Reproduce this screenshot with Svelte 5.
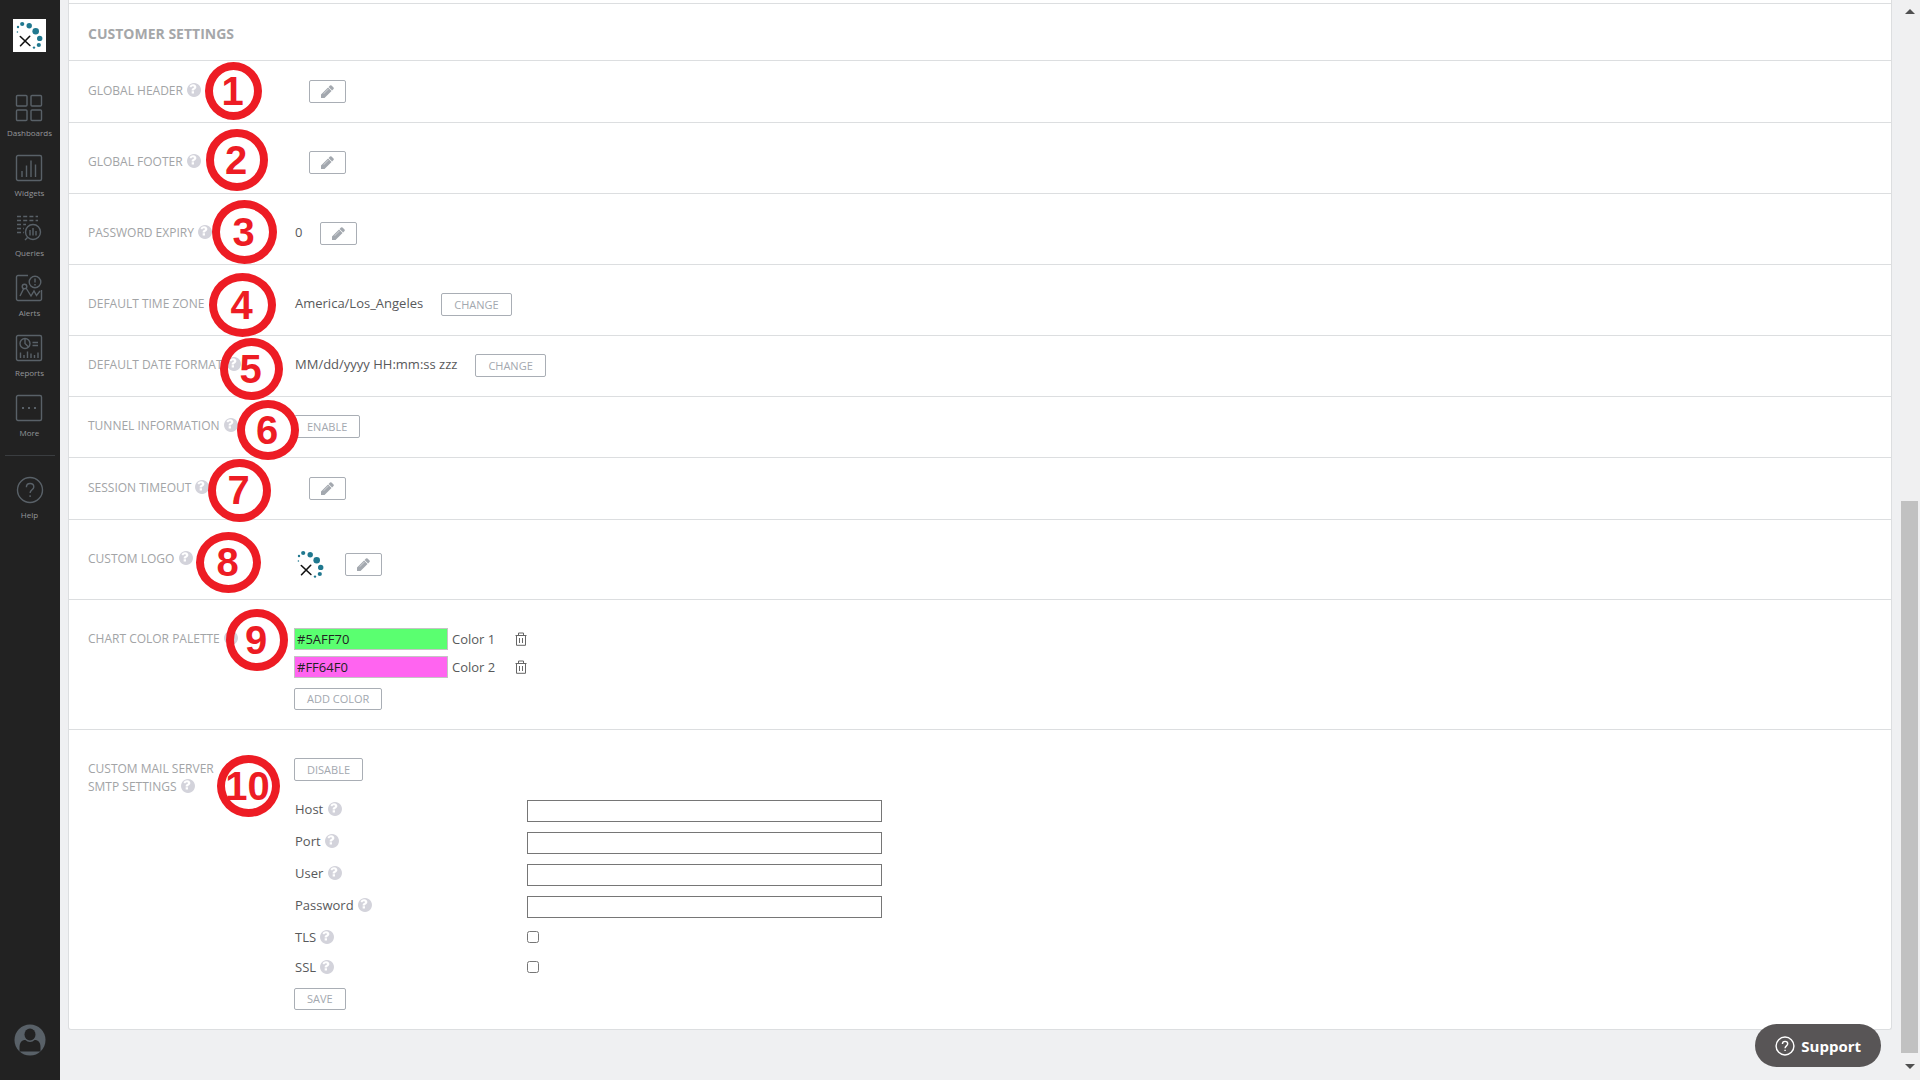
<script>
  const nav_items = [
    { label: "Dashboards", icon: "dashboards" },
    { label: "Widgets", icon: "widgets" },
    { label: "Queries", icon: "queries" },
    { label: "Alerts", icon: "alerts" },
    { label: "Reports", icon: "reports" },
    { label: "More", icon: "more" }
  ];

  const smtp_fields = [
    { id: "host", label: "Host", type: "text" },
    { id: "port", label: "Port", type: "text" },
    { id: "user", label: "User", type: "text" },
    { id: "password", label: "Password", type: "password" },
    { id: "tls", label: "TLS", type: "checkbox" },
    { id: "ssl", label: "SSL", type: "checkbox" }
  ];

  let colors = $state(["#5AFF70", "#FF64F0"]);

  // numbered callouts lying over the settings list
  const callouts = [
    { x: 205, y: 62, w: 57, h: 58 },
    { x: 206, y: 129, w: 62, h: 62 },
    { x: 212, y: 200, w: 65, h: 64 },
    { x: 209, y: 273, w: 67, h: 64 },
    { x: 220, y: 338, w: 63, h: 62 },
    { x: 237, y: 400, w: 62, h: 60 },
    { x: 208, y: 459, w: 63, h: 63 },
    { x: 196, y: 532, w: 65, h: 61 },
    { x: 226, y: 609, w: 62, h: 62 },
    { x: 217, y: 755, w: 63, h: 62 }
  ];
</script>

{#snippet logo()}
  <svg class="logo" viewBox="0 0 33 33" width="33" height="33">
    <g fill="#20788f">
      <circle cx="4.4" cy="13" r="0.8" />
      <circle cx="5" cy="8" r="1.2" />
      <circle cx="9.2" cy="5" r="2.1" />
      <circle cx="16.2" cy="6.8" r="2.7" />
      <circle cx="22.7" cy="12.2" r="3.3" />
      <circle cx="26.7" cy="19.4" r="2.7" />
      <circle cx="25.8" cy="26" r="2.1" />
      <circle cx="21" cy="28.6" r="1.2" />
    </g>
    <path d="M7.3 17.5l9.6 9M16.7 17.3l-9.2 9.4" stroke="#111" stroke-width="1.6" stroke-linecap="round" />
  </svg>
{/snippet}

{#snippet help()}
  <svg class="help" viewBox="128 128 1536 1536" width="14" height="14">
    <path fill="currentColor" d="M896 1248v-192q0-14-9-23t-23-9h-192q-14 0-23 9t-9 23v192q0 14 9 23t23 9h192q14 0 23-9t9-23zm256-672q0-88-55.5-163t-138.5-116-170-41q-243 0-371 213-15 24 8 42l132 100q7 6 19 6 16 0 25-12 53-68 86-92 34-24 86-24 48 0 85.5 26t37.5 59q0 38-20 61t-68 45q-63 28-115.5 86.5t-52.5 125.5v36q0 14 9 23t23 9h192q14 0 23-9t9-23q0-19 21.5-49.5t54.5-49.5q32-18 49-28.5t46-35 44.5-48 28-60.5 12.5-81zm512 320q0 209-103 385.500t-279.500 279.500-385.500 103-385.500-103-279.500-279.500-103-385.500 103-385.500 279.500-279.500 385.500-103 385.500 103 279.500 279.500 103 385.500z" />
  </svg>
{/snippet}

{#snippet edit(name)}
  <button class="btn edit" aria-label="Edit {name}">
    <svg viewBox="128 128 1536 1536" width="13" height="13">
      <path fill="currentColor" d="M1014 608q0-22-22-22-10 0-17 7l-542 542q-7 7-7 17 0 22 22 22 10 0 17-7l542-542q7-7 7-17zm-54-192l416 416-832 832h-416v-416zm683 96q0 53-37 90l-166 166-416-416 166-165q36-38 90-38 53 0 91 38l235 234q37 39 37 91z" />
    </svg>
  </button>
{/snippet}

{#snippet question()}
  <circle cx="14" cy="14" r="12.5" />
  <path d="M10.4 11.2c0-2.2 1.5-3.7 3.7-3.7s3.7 1.4 3.7 3.4c0 2.8-3.7 3-3.7 6.1" />
  <path d="M14.1 19.3v1.6" />
{/snippet}

{#snippet nav_icon(icon)}
  <svg class="nav-icon" viewBox="0 0 28 28" width="28" height="28">
    {#if icon === "dashboards"}
      <rect x="1.5" y="1.5" width="10.5" height="10.5" rx="1" />
      <rect x="16" y="1.5" width="10.5" height="10.5" rx="1" />
      <rect x="1.5" y="16" width="10.5" height="10.5" rx="1" />
      <rect x="16" y="16" width="10.5" height="10.5" rx="1" />
    {:else if icon === "widgets"}
      <rect x="1.5" y="1.5" width="25" height="25" rx="1.5" />
      <path d="M7 17v6M11.5 11.5V23M16 6.5V23M20.5 10.5V23" />
    {:else if icon === "queries"}
      <path stroke-dasharray="4 2.2" d="M2 2.5h21M2 6.5h21M2 10.5h9M2 14.5h7M2 18.5h7" />
      <circle cx="18" cy="18" r="7.5" />
      <path d="M15 16v5.5M18 14v7.5M21 17v4.5M12.5 23.5l-2.5 2.5" />
    {:else if icon === "alerts"}
      <path d="M13 1.5H3a1.5 1.5 0 0 0-1.5 1.5v22A1.5 1.5 0 0 0 3 26.5h22a1.5 1.5 0 0 0 1.5-1.5v-9" />
      <circle cx="20" cy="8" r="5.8" />
      <path d="M20 4.5v4M20 10v1.5M5 22l4-8M11 14l5 8 3-5 2.5 4.5L25 17" />
      <circle cx="9.5" cy="12.5" r="2.3" />
    {:else if icon === "reports"}
      <rect x="1.5" y="1.5" width="25" height="25" rx="1.5" />
      <circle cx="10" cy="9.5" r="5" />
      <path d="M10 4.5v5l3.5 3.5M17.5 8.5H23M17.5 11.5H23M5.5 18.5V24M9 21v3M12.5 17.5V24M16 19.5V24M19.5 21v3M23 18.5V24" />
    {:else if icon === "more"}
      <rect x="1.5" y="1.5" width="25" height="25" rx="1.5" />
      <path stroke-width="2" d="M7 14h2M13 14h2M19 14h2" />
    {:else}
      {@render question()}
    {/if}
  </svg>
{/snippet}

<div class="page">
  <aside>
    <a class="brand" href="#home" aria-label="Home">{@render logo()}</a>
    <nav>
      {#each nav_items as item}
        <a class="nav-link" href="#{item.icon}">
          {@render nav_icon(item.icon)}
          <span>{item.label}</span>
        </a>
      {/each}
    </nav>
    <hr />
    <a class="nav-link" href="#help">
      {@render nav_icon("help")}
      <span>Help</span>
    </a>
    <a class="avatar" href="#account" aria-label="Account">
      <svg viewBox="0 0 32 32" width="32" height="32">
        <circle cx="16" cy="16" r="15.5" fill="#596168" />
        <path d="M5.500 27.500v-4c0-5 2-7.500 6-7.500h9c4 0 6 2.500 6 7.500v4z" fill="#222" />
        <ellipse cx="16" cy="11" rx="6.5" ry="7" fill="#596168" />
        <ellipse cx="16" cy="10.5" rx="5.5" ry="6" fill="#222" />
      </svg>
    </a>
  </aside>

  <main>
    <div class="card">
      <h2>CUSTOMER SETTINGS</h2>

      <section class="row roomy">
        <div class="label">GLOBAL HEADER {@render help()}</div>
        <div class="value empty">{@render edit("global header")}</div>
      </section>
      <section class="row tall">
        <div class="label">GLOBAL FOOTER {@render help()}</div>
        <div class="value empty">{@render edit("global footer")}</div>
      </section>
      <section class="row tall">
        <div class="label">PASSWORD EXPIRY {@render help()}</div>
        <div class="value"><span>0</span>{@render edit("password expiry")}</div>
      </section>
      <section class="row tall">
        <div class="label">DEFAULT TIME ZONE</div>
        <div class="value"><span>America/Los_Angeles</span><button class="btn">CHANGE</button></div>
      </section>
      <section class="row">
        <div class="label">DEFAULT DATE FORMAT {@render help()}</div>
        <div class="value"><span>MM/dd/yyyy HH:mm:ss zzz</span><button class="btn">CHANGE</button></div>
      </section>
      <section class="row">
        <div class="label">TUNNEL INFORMATION {@render help()}</div>
        <div class="value"><button class="btn">ENABLE</button></div>
      </section>
      <section class="row roomy">
        <div class="label">SESSION TIMEOUT {@render help()}</div>
        <div class="value empty">{@render edit("session timeout")}</div>
      </section>
      <section class="row tall">
        <div class="label">CUSTOM LOGO {@render help()}</div>
        <div class="value image">{@render logo()}{@render edit("custom logo")}</div>
      </section>
      <section class="row tall">
        <div class="label">CHART COLOR PALETTE {@render help()}</div>
        <div class="palette">
          {#each colors as color, i}
            <div class="swatch">
              <input id="color-{i}" type="text" bind:value={colors[i]} style="background: {color}" />
              <label for="color-{i}">Color {i + 1}</label>
              <button class="trash" aria-label="Delete color {i + 1}">
                <svg viewBox="0 0 12 14" width="12" height="14" fill="none" stroke="currentColor">
                  <path d="M0.5 3.5h11M3.5 3V1h5v2M1.5 3.5v9.8h9V3.5M4.5 6v5M7.5 6v5" />
                </svg>
              </button>
            </div>
          {/each}
          <button class="btn low add">ADD COLOR</button>
        </div>
      </section>
      <section class="row tall">
        <div class="label">CUSTOM MAIL SERVER SMTP SETTINGS {@render help()}</div>
        <form onsubmit={(e) => e.preventDefault()}>
          <button class="btn disable" type="button">DISABLE</button>
          {#each smtp_fields as field}
            <div class="field" class:check={field.type === "checkbox"}>
              <label for={field.id}>{field.label} {@render help()}</label>
              <input id={field.id} type={field.type} />
            </div>
          {/each}
          <button class="btn low" type="submit">SAVE</button>
        </form>
      </section>
    </div>
  </main>

  <div class="scrollbar">
    <svg viewBox="0 0 10 5" width="10" height="5"><path d="M0 5l5-5 5 5z" fill="#505050" /></svg>
    <div></div>
    <div class="thumb"></div>
    <svg viewBox="0 0 10 5" width="10" height="5"><path d="M0 0l5 5 5-5z" fill="#505050" /></svg>
  </div>

  {#each callouts as c, i}
    <div class="callout" style="left: {c.x}px; top: {c.y}px; width: {c.w}px; height: {c.h}px">{i + 1}</div>
  {/each}

  <button class="support">
    <svg viewBox="0 0 28 28" width="20" height="20">{@render question()}</svg>
    Support
  </button>
</div>

<style>
:global(body) {
  background: #eff0f2;
  font-family: "Open Sans", sans-serif;
}
.page {
  position: relative;
  display: flex;
  min-height: 100vh;
  font-size: 13px;
  line-height: 18px;
  color: #58595b;
}
a {
  text-decoration: none;
}
svg {
  display: block;
  flex: none;
}
button,
input {
  box-sizing: border-box;
  margin: 0;
  font-family: inherit;
}
aside {
  box-sizing: border-box;
  display: flex;
  flex-direction: column;
  align-items: center;
  width: 60px;
  padding-right: 1px;
  flex: none;
  background: #222;
}
.brand {
  margin: 19px 0 42px;
  background: #fff;
}
.nav-link {
  display: flex;
  flex-direction: column;
  align-items: center;
  height: 60px;
  font-size: 8px;
  line-height: 12px;
  color: #94969a;
}
.nav-link span {
  margin-top: 5px;
}
.nav-icon {
  fill: none;
  stroke: #596168;
  stroke-width: 1.4;
}
hr {
  width: 50px;
  margin: 1px 0 20px;
  border: 0;
  border-top: 1px solid #3a3d40;
}
.avatar {
  margin: auto 0 24px;
}
main {
  flex: 1;
  padding: 0 8px;
}
.card {
  background: #fff;
  border: 1px solid #dcdee0;
  border-top: 0;
  border-radius: 0 0 3px 3px;
  padding-top: 3px;
}
h2 {
  margin: 0;
  padding: 21px 19px 17px;
  border-top: 1px solid #dcdee0;
  font-size: 14px;
  line-height: 18px;
  color: #a5a7a9;
}
.row {
  display: grid;
  grid-template-columns: 206px 1fr;
  padding: 18px 19px 19px;
  border-top: 1px solid #dcdee0;
}
.roomy {
  padding-top: 19px;
}
.tall {
  padding-top: 28px;
}
.label {
  width: 150px;
  padding-top: 2px;
  font-size: 12px;
  color: #a2a4a6;
  white-space: nowrap;
}
.row:last-child .label {
  white-space: normal;
}
.help {
  display: inline-block;
  margin-left: 1px;
  vertical-align: -2px;
  color: #d3d3db;
}
.value {
  display: flex;
  align-items: center;
  gap: 18px;
}
.value span {
  padding: 0 0 3px 1px;
}
.empty {
  padding-left: 15px;
}
.image {
  height: 32px;
}
.btn {
  height: 23px;
  padding: 0 12px;
  background: #fff;
  border: 1px solid #a9aeb5;
  border-radius: 2px;
  font-size: 11px;
  line-height: 18px;
  color: #a3a8af;
}
.edit {
  padding: 0 11px;
}
.low {
  height: 22px;
}
.palette {
  display: flex;
  flex-direction: column;
  align-items: flex-start;
  gap: 6px;
}
.swatch {
  display: flex;
  align-items: center;
}
.swatch input {
  width: 154px;
  height: 22px;
  padding: 0 2px;
  border: 1px solid #c4c4c4;
  font-size: 13px;
  color: #222;
}
.swatch label {
  width: 63px;
  margin-left: 4px;
}
.trash {
  padding: 0;
  border: 0;
  background: none;
  color: #666;
}
.add {
  margin-top: 4px;
}
form {
  display: flex;
  flex-direction: column;
  align-items: flex-start;
  gap: 10px;
}
.disable {
  margin-bottom: 9px;
}
.field {
  display: grid;
  grid-template-columns: 233px 355px;
  height: 22px;
}
.field label {
  padding-left: 1px;
}
.field input {
  height: 22px;
  padding: 0 2px;
  border: 1px solid #767676;
  background: #fff;
}
.field.check {
  height: 20px;
}
.field.check input {
  width: 12px;
  height: 12px;
  margin-top: 3px;
}
.scrollbar {
  display: grid;
  grid-template-rows: 22px 479fr 552fr 27px;
  place-items: center;
  width: 17px;
  padding: 0 2px 0 1px;
  flex: none;
  background: #f0f0f1;
}
.thumb {
  width: 100%;
  height: 100%;
  background: #c1c1c1;
}
.callout {
  position: absolute;
  box-sizing: border-box;
  display: flex;
  align-items: center;
  justify-content: center;
  padding-right: 2px;
  border: 8px solid #ed1c24;
  border-radius: 50%;
  font: bold 40px "Liberation Sans", Arial, sans-serif;
  color: #ed1c24;
  pointer-events: none;
}
.support {
  position: fixed;
  right: 39px;
  bottom: 13px;
  display: flex;
  align-items: center;
  gap: 6px;
  height: 43px;
  padding: 0 20px;
  border: 0;
  border-radius: 22px;
  background: #585556;
  font-size: 15px;
  font-weight: 700;
  color: #fff;
}
.support svg {
  fill: none;
  stroke: #fff;
  stroke-width: 2;
}
</style>
